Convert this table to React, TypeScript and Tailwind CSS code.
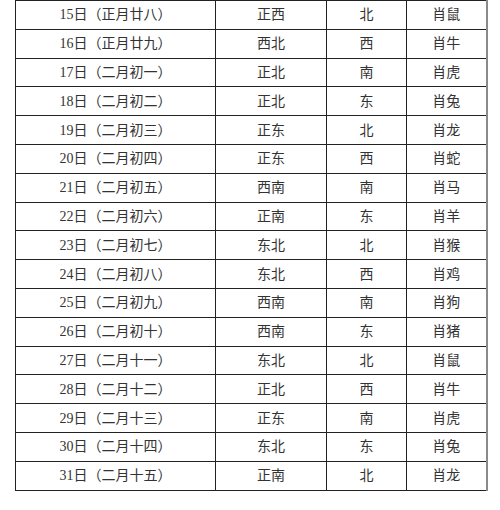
const rows: [string, string, string, string][] = [
  ['15日（正月廿八）', '正西', '北', '肖鼠'],
  ['16日（正月廿九）', '西北', '西', '肖牛'],
  ['17日（二月初一）', '正北', '南', '肖虎'],
  ['18日（二月初二）', '正北', '东', '肖兔'],
  ['19日（二月初三）', '正东', '北', '肖龙'],
  ['20日（二月初四）', '正东', '西', '肖蛇'],
  ['21日（二月初五）', '西南', '南', '肖马'],
  ['22日（二月初六）', '正南', '东', '肖羊'],
  ['23日（二月初七）', '东北', '北', '肖猴'],
  ['24日（二月初八）', '东北', '西', '肖鸡'],
  ['25日（二月初九）', '西南', '南', '肖狗'],
  ['26日（二月初十）', '西南', '东', '肖猪'],
  ['27日（二月十一）', '东北', '北', '肖鼠'],
  ['28日（二月十二）', '正北', '西', '肖牛'],
  ['29日（二月十三）', '正东', '南', '肖虎'],
  ['30日（二月十四）', '东北', '东', '肖兔'],
  ['31日（二月十五）', '正南', '北', '肖龙'],
];

export default function App() {
  return (
    <div className="h-[510px] w-[500px] bg-white pl-[15px] font-['Liberation_Serif','Noto_Sans_CJK_SC',serif] text-[14px] text-[#333]">
      <table className="w-[471px] table-fixed border-collapse border-r-2 border-r-[#8a8a8a]">
        <colgroup>
          <col className="w-[200px]" />
          <col className="w-[111px]" />
          <col className="w-[80px]" />
          <col className="w-[80px]" />
        </colgroup>
        <tbody>
          {rows.map((r) => (
            <tr key={r[0]} className="h-[28.8px]">
              <td className="border border-[#222] p-0 pt-px text-center leading-none">{r[0]}</td>
              <td className="border border-[#222] p-0 pt-px text-center leading-none">{r[1]}</td>
              <td className="border border-[#222] p-0 pt-px text-center leading-none">{r[2]}</td>
              <td className="border border-y-[#222] border-l-[#222] border-r-[#8a8a8a] p-0 pt-px text-center leading-none">
                {r[3]}
              </td>
            </tr>
          ))}
        </tbody>
      </table>
    </div>
  );
}
